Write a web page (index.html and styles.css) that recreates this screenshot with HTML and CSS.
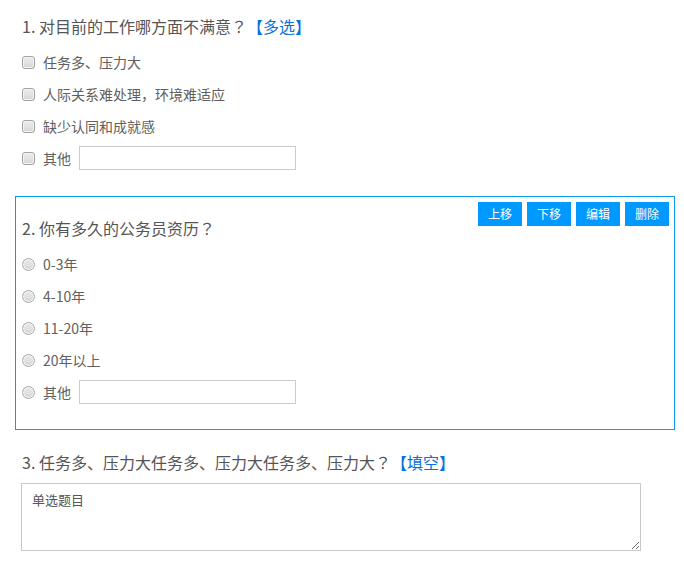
FILE: index.html
```html
<!DOCTYPE html>
<html lang="zh-CN">
<head>
<meta charset="utf-8">
<title>问卷</title>
<link rel="stylesheet" href="styles.css">
</head>
<body>
<div class="survey">
  <div class="question">
    <div class="q-title">1. 对目前的工作哪方面不满意<span class="punct" lang="ja">？</span><span class="q-type">【多选】</span></div>
    <ul class="options">
      <li class="option"><input type="checkbox" class="check"><span class="label">任务多、压力大</span></li>
      <li class="option"><input type="checkbox" class="check"><span class="label">人际关系难处理，环境难适应</span></li>
      <li class="option"><input type="checkbox" class="check"><span class="label">缺少认同和成就感</span></li>
      <li class="option"><input type="checkbox" class="check"><span class="label">其他</span><input type="text" class="other-input"></li>
    </ul>
  </div>
  <div class="question active">
    <div class="toolbar">
      <button class="tool-btn">上移</button>
      <button class="tool-btn">下移</button>
      <button class="tool-btn">编辑</button>
      <button class="tool-btn">删除</button>
    </div>
    <div class="q-title">2. 你有多久的公务员资历<span class="punct" lang="ja">？</span></div>
    <ul class="options">
      <li class="option"><input type="radio" name="q2" class="radio"><span class="label">0-3年</span></li>
      <li class="option"><input type="radio" name="q2" class="radio"><span class="label">4-10年</span></li>
      <li class="option"><input type="radio" name="q2" class="radio"><span class="label">11-20年</span></li>
      <li class="option"><input type="radio" name="q2" class="radio"><span class="label">20年以上</span></li>
      <li class="option"><input type="radio" name="q2" class="radio"><span class="label">其他</span><input type="text" class="other-input"></li>
    </ul>
  </div>
  <div class="question">
    <div class="q-title">3. 任务多、压力大任务多、压力大任务多、压力大<span class="punct" lang="ja">？</span><span class="q-type">【填空】</span></div>
    <textarea class="answer" placeholder="单选题目"></textarea>
  </div>
</div>
</body>
</html>
```

FILE: styles.css
```css
html, body {
  margin: 0;
  padding: 0;
  background: #fff;
}

body {
  font-family: "Noto Sans CJK SC", "Noto Sans", sans-serif;
  color: #666;
}

.survey {
  margin-top: -6px;
}

.question {
  position: relative;
  margin: 0 9px 0 15px;
  padding: 15px 6px 21px;
  border: 1px solid transparent;
}

.question.active {
  border-color: #0a9bf5;
}

.q-title {
  height: 32px;
  line-height: 32px;
  font-size: 16px;
  color: #555;
  margin-bottom: 4px;
  white-space: nowrap;
}

.punct {
  font-family: "Noto Sans CJK JP", "Noto Sans CJK SC", sans-serif;
}

.q-type {
  color: #0a6fd8;
}

.options {
  list-style: none;
  margin: 0;
  padding: 0;
}

.option {
  display: flex;
  align-items: center;
  height: 32px;
  font-size: 14px;
  line-height: 20px;
  color: #606060;
}

.check,
.radio {
  -webkit-appearance: none;
  appearance: none;
  box-sizing: border-box;
  width: 13px;
  height: 13px;
  margin: 0 8px 0 0;
  border: 1px solid #a2a2a2;
  background: linear-gradient(#ececec, #d6d6d6);
  box-shadow: inset 0 0 0 1px #f3f3f3;
  flex: none;
}

.check {
  border-radius: 3px;
}

.radio {
  border-radius: 50%;
  border-color: #aaa;
}

.other-input {
  box-sizing: border-box;
  width: 217px;
  height: 24px;
  margin: 0 0 0 8px;
  border: 1px solid #ccc;
  padding: 0 6px;
  font: inherit;
}

.toolbar {
  position: absolute;
  top: 5px;
  right: 5px;
  display: flex;
  gap: 5px;
}

.tool-btn {
  width: 44px;
  height: 24px;
  padding: 0;
  border: none;
  background: #0099ff;
  color: #fff;
  font-family: "Noto Sans CJK SC", sans-serif;
  font-size: 12px;
  line-height: 24px;
  cursor: pointer;
}

.answer {
  display: block;
  box-sizing: border-box;
  width: 620px;
  height: 68px;
  margin: 5px 0 0 -1px;
  padding: 7px 10px;
  border: 1px solid #c8c8c8;
  font-family: "Noto Sans CJK SC", sans-serif;
  font-size: 13px;
  line-height: 18px;
  color: #555;
}

.answer::placeholder {
  color: #555;
}
```
